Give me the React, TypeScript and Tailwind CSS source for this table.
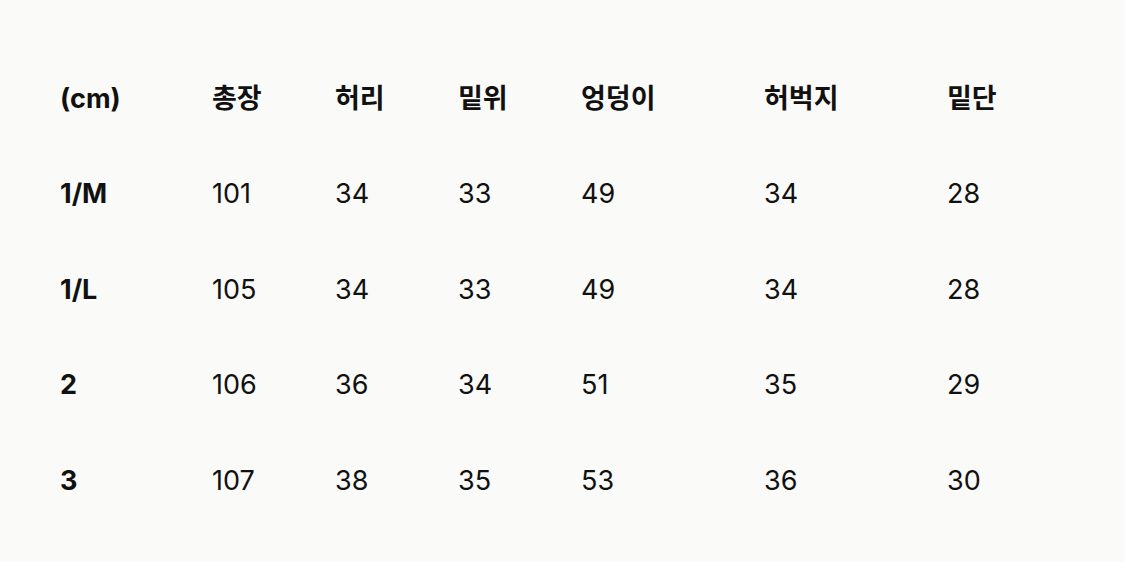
const headers = ["(cm)", "총장", "허리", "밑위", "엉덩이", "허벅지", "밑단"];

const rows: string[][] = [
  ["1/M", "101", "34", "33", "49", "34", "28"],
  ["1/L", "105", "34", "33", "49", "34", "28"],
  ["2", "106", "36", "34", "51", "35", "29"],
  ["3", "107", "38", "35", "53", "36", "30"],
];

const grid =
  "grid grid-cols-[152px_123px_123px_123px_183px_183px_1fr] items-center h-[95.5px]";

const App = (): JSX.Element => {
  return (
    <div
      className="w-[1125px] h-[562px] bg-[#fafaf8] text-[#111] pl-[60px] pt-[51px]"
      style={{ fontFamily: 'Inter, "Noto Sans CJK KR", sans-serif' }}
    >
      <div className={grid}>
        {headers.map((h) => (
          <div key={h} className="text-[27px] font-bold">
            {h}
          </div>
        ))}
      </div>
      {rows.map((row) => (
        <div key={row[0]} className={grid}>
          {row.map((cell, i) => (
            <div
              key={i}
              className={i === 0 ? "text-[27px] font-bold" : "text-[27px] font-normal"}
            >
              {cell}
            </div>
          ))}
        </div>
      ))}
    </div>
  );
};

export default App;
